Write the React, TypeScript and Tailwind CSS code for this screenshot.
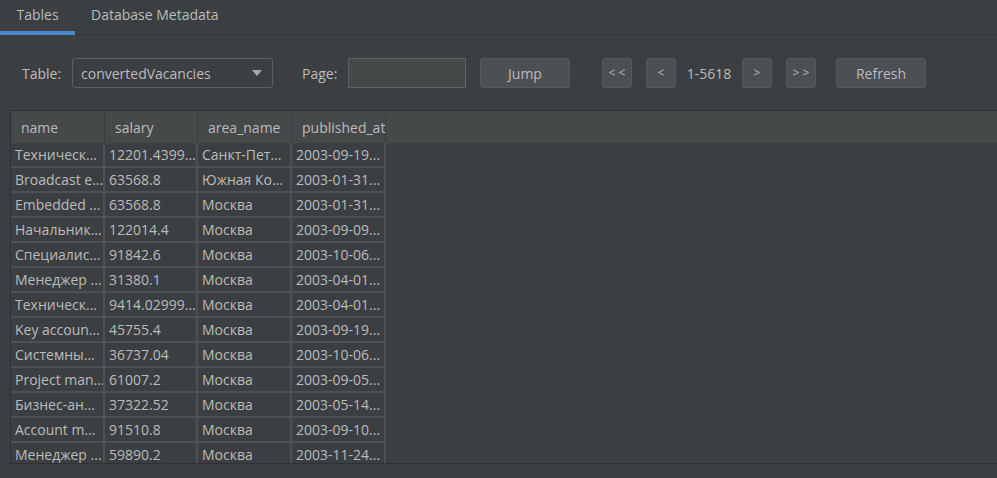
const ROWS: [string, string, string, string][] = [
  ["Техническ...", "12201.4399...", "Санкт-Пет...", "2003-09-19..."],
  ["Broadcast e...", "63568.8", "Южная Ко...", "2003-01-31..."],
  ["Embedded ...", "63568.8", "Москва", "2003-01-31..."],
  ["Начальник...", "122014.4", "Москва", "2003-09-09..."],
  ["Специалис...", "91842.6", "Москва", "2003-10-06..."],
  ["Менеджер ...", "31380.1", "Москва", "2003-04-01..."],
  ["Техническ...", "9414.02999...", "Москва", "2003-04-01..."],
  ["Key accoun...", "45755.4", "Москва", "2003-09-19..."],
  ["Системны...", "36737.04", "Москва", "2003-10-06..."],
  ["Project man...", "61007.2", "Москва", "2003-09-05..."],
  ["Бизнес-ан...", "37322.52", "Москва", "2003-05-14..."],
  ["Account m...", "91510.8", "Москва", "2003-09-10..."],
  ["Менеджер ...", "59890.2", "Москва", "2003-11-24..."],
];

const COLS = ["name", "salary", "area_name", "published_at"];
const WIDTHS = ["w-[94px]", "w-[93px]", "w-[94px]", "w-[94px]"];

function Btn({ label, className }: { label: string; className: string }) {
  return (
    <button
      className={`flex h-[30px] items-center justify-center rounded-[3px] border border-[#55595b] bg-[#4c5052] text-[#bbbbbb] ${className}`}
    >
      {label}
    </button>
  );
}

export default function App() {
  return (
    <div
      className="flex h-[478px] w-[997px] flex-col overflow-hidden bg-[#3c3f41] text-[14px] text-[#bbbbbb]"
      style={{ fontFamily: '"Open Sans", "Noto Sans", sans-serif' }}
    >
      {/* tabs */}
      <div className="flex h-[35px] shrink-0 border-b border-[#323435]">
        <div className="relative flex w-[75px] items-center justify-center pb-[6px]">
          Tables
          <span className="absolute bottom-[-1px] left-0 h-[4px] w-[75px] bg-[#4a88c7]" />
        </div>
        <div className="flex items-center pb-[6px] pl-[16px]">Database Metadata</div>
      </div>

      {/* toolbar */}
      <div className="mt-[23px] flex h-[30px] shrink-0 items-center pl-[22px]">
        <span className="w-[40px]">Table:</span>
        <div className="ml-[10px] flex h-[30px] w-[201px] items-center justify-between rounded-[3px] border border-[#5e6163] bg-[#3c3f41] pl-[8px] pr-[10px]">
          <span>convertedVacancies</span>
          <svg width="10" height="6" viewBox="0 0 10 6">
            <path d="M0 0 L10 0 L5 6 Z" fill="#a9a9a9" />
          </svg>
        </div>
        <span className="ml-[29px] w-[36px]">Page:</span>
        <div className="ml-[10px] h-[30px] w-[118px] border border-[#5e6163] bg-[#45494a]" />
        <Btn label="Jump" className="ml-[14px] w-[90px]" />
        <Btn label="< <" className="ml-[32px] w-[30px] text-[12px]" />
        <Btn label="<" className="ml-[14px] w-[30px] text-[12px]" />
        <span className="ml-[10px] w-[46px] text-center">1-5618</span>
        <Btn label=">" className="ml-[10px] w-[30px] text-[12px]" />
        <Btn label="> >" className="ml-[14px] w-[30px] text-[12px]" />
        <Btn label="Refresh" className="ml-[20px] w-[90px]" />
      </div>

      {/* table */}
      <div className="ml-[10px] mt-[22px] flex h-[354px] shrink-0 flex-col overflow-hidden border-l border-t border-b border-[#2f3133]">
        <div className="flex h-[32px] shrink-0 bg-[#45494a]">
          {COLS.map((c, i) => (
            <div
              key={c}
              className={`flex items-center border-r border-[#393c3e] pl-[10px] ${WIDTHS[i]} ${i === 0 ? "pl-[10px]" : ""}`}
            >
              {c}
            </div>
          ))}
        </div>
        <div className="flex flex-col">
          {ROWS.map((r, ri) => (
            <div key={ri} className="flex h-[25px] shrink-0">
              {r.map((v, ci) => (
                <div
                  key={ci}
                  className={`flex items-center overflow-hidden whitespace-nowrap border-b-2 border-r-2 border-[#4d5153] pl-[4px] ${WIDTHS[ci]}`}
                >
                  {v}
                </div>
              ))}
            </div>
          ))}
        </div>
      </div>
    </div>
  );
}
